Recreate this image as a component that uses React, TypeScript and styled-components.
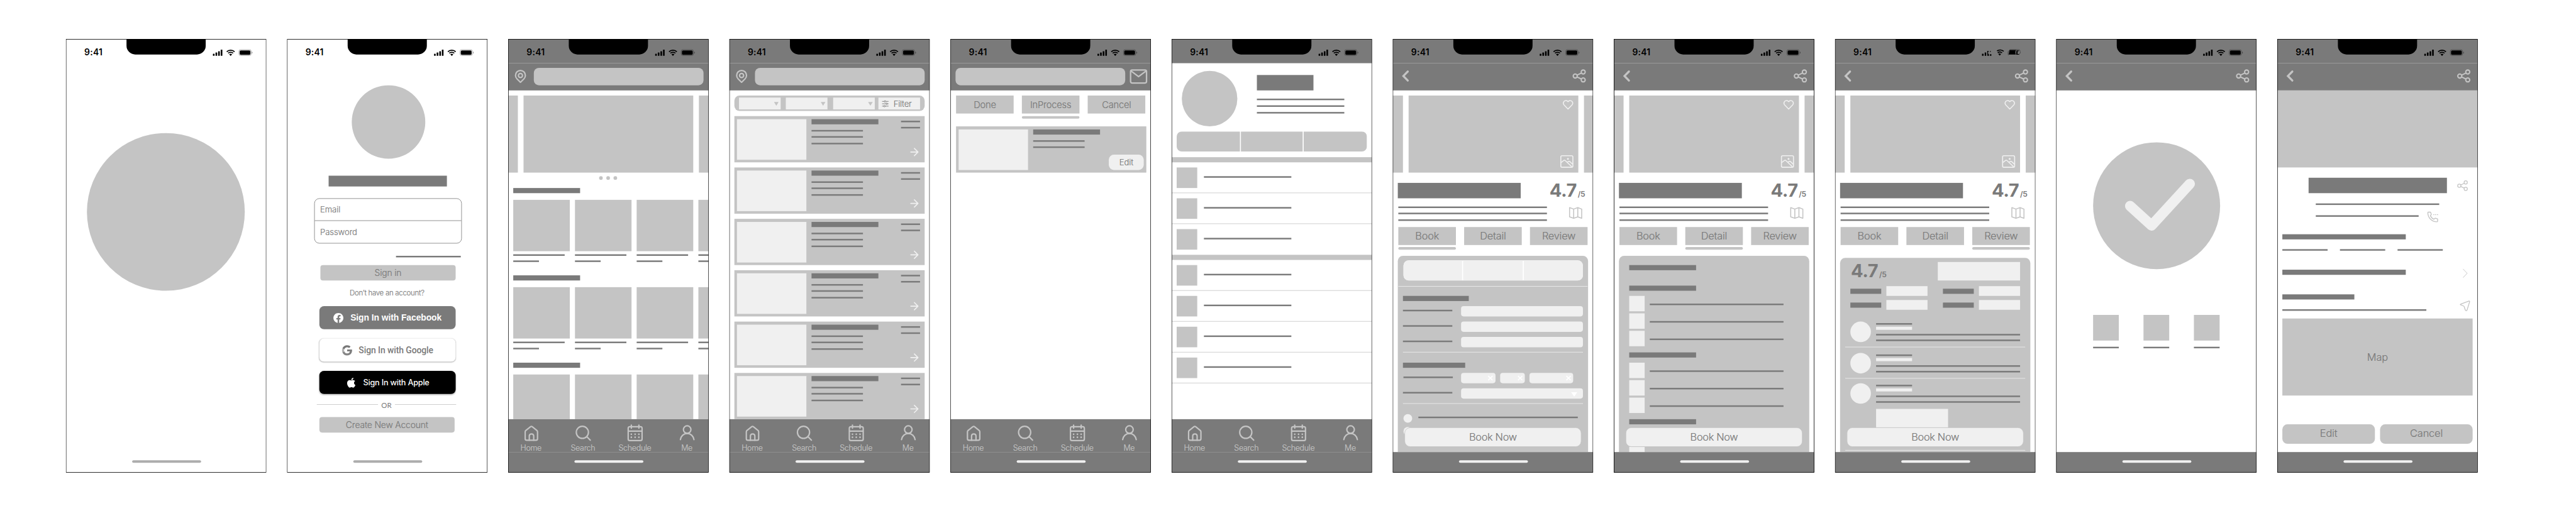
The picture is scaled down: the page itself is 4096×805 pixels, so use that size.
import React from "react";
import styled, { createGlobalStyle, css } from "styled-components";
import { FaApple, FaFacebook } from "react-icons/fa";

const DARK = "#7a7a7a";
const MID = "#c4c4c4";
const LIGHT = "#f0f0f0";

const GlobalStyle = createGlobalStyle`
  body { margin: 0; background: #fff; font-family: Inter, "Liberation Sans", sans-serif; }
  *, *::before, *::after { box-sizing: border-box; }
  svg { display: block; flex: none; overflow: visible; }
`;

/* Light weight, slightly emboldened: sits between Inter Light and Regular. */
const softText = css`
  font-weight: 300;
  -webkit-text-stroke: 0.2px currentColor;
`;

/* ---------- board and device frame ---------- */

const Viewport = styled.div`
  width: 4096px;
  height: 805px;
  overflow: hidden;
`;

const Board = styled.main`
  display: flex;
  align-items: flex-start;
  gap: 40px;
  width: 5009px;
  height: 985px;
  padding: 76px 128px;
  background: #fff;
  transform: scale(0.81773, 0.81726);
  transform-origin: 0 0;
`;

const Frame = styled.section`
  position: relative;
  display: flex;
  flex-direction: column;
  flex: none;
  width: 390px;
  height: 844px;
  overflow: hidden;
  background: #fff;

  &::after {
    content: "";
    position: absolute;
    inset: 0;
    border: 1px solid #000;
    pointer-events: none;
  }
`;

const Body = styled.div<{ $pad?: string }>`
  position: relative;
  display: flex;
  flex-direction: column;
  flex: 1;
  min-height: 0;
  overflow: hidden;
  padding: ${(p) => p.$pad ?? "0"};
`;

const StatusRow = styled.div<{ $tinted?: boolean }>`
  display: flex;
  align-items: flex-start;
  flex: none;
  height: 47px;
  background: ${(p) => (p.$tinted ? DARK : "transparent")};
`;

const Time = styled.span`
  width: 117.5px;
  padding: 14px 0 0 36px;
  font-size: 17px;
  font-weight: 600;
  line-height: 24px;
  letter-spacing: 0.3px;
  white-space: nowrap;
`;

const Notch = styled.div`
  width: 154.5px;
  height: 30px;
  border-radius: 0 0 17px 17px;
  background: #000;
`;

const StatusIcons = styled.div`
  display: flex;
  gap: 7.7px;
  padding: 19.5px 0 0 13.6px;
`;

const Status = ({ tinted = false, torn = false }: { tinted?: boolean; torn?: boolean }) => (
  <StatusRow $tinted={tinted}>
    <Time>9:41</Time>
    <Notch />
    <StatusIcons>
      {torn ? (
        <>
          <svg width="18.4" height="13" viewBox="0 0 18.4 13">
            <path d="M0 8.7h3v4H0zM5.2 6.3h3v6.4h-3zM10.2 3.2h2.6v1.6h-1v3.2l1.8 2.4v2.3h-3.2zM15.2 3.4h1.8v1.4h-1.8zM15.4 9.6h2.8v3.1h-2.8z" />
          </svg>
          <svg width="17" height="13" viewBox="0 0 17 13" fill="none" stroke="#000">
            <path d="M3.2 3.1A10.6 10.6 0 0 1 16.1 4" strokeWidth="2" />
            <path d="M4.6 6.8a6.6 6.6 0 0 1 8.4.3" strokeWidth="2" />
            <path d="M5.6 9.2a4.2 4.2 0 0 1 5.3 0L8.6 12.4z" fill="#000" stroke="none" />
          </svg>
          <svg width="27" height="13" viewBox="0 0 27 13">
            <path d="M3.4 1.4H16l-1.2 4 .6 4.6H1.8z" />
            <path d="M17 2.2h4.6v1.4h-2.4v5.6h3v1.3h-6z" />
            <path d="M4 .6h17a3 3 0 0 1 3 3v1M2 2.4.7 5v4.6a3 3 0 0 0 1 2M22 8.4h1.6M24.4 5v2.8" fill="none" stroke="#3c3c3c" />
          </svg>
        </>
      ) : (
        <>
          <svg width="18.4" height="13" viewBox="0 0 18.4 13">
            <rect x="0" y="8.5" width="3.2" height="4.2" rx=".7" />
            <rect x="5.1" y="6.3" width="3.2" height="6.4" rx=".7" />
            <rect x="10.2" y="3.6" width="3.2" height="9.1" rx=".7" />
            <rect x="15.2" y=".7" width="3.2" height="12" rx=".7" />
          </svg>
          <svg width="17" height="13" viewBox="0 0 17 13" fill="none" stroke="#000">
            <path d="M.9 4.7a10.9 10.9 0 0 1 15.2 0" strokeWidth="2.2" />
            <path d="M3.7 7.6a6.9 6.9 0 0 1 9.6 0" strokeWidth="2.1" />
            <path d="M5.7 9.9a4.1 4.1 0 0 1 5.6 0L8.5 12.8z" fill="#000" stroke="none" />
          </svg>
          <svg width="27" height="13" viewBox="0 0 27 13">
            <rect x=".5" y=".6" width="24" height="11.6" rx="3.6" fill="none" stroke="#000" strokeOpacity=".38" />
            <rect x="2" y="2.1" width="21" height="8.6" rx="2.2" />
            <path d="M25.8 4.4v4c.8-.3 1.4-1.1 1.4-2s-.6-1.7-1.4-2z" fillOpacity=".42" />
          </svg>
        </>
      )}
    </StatusIcons>
  </StatusRow>
);

const Footer = styled.footer<{ $tinted?: boolean }>`
  display: flex;
  flex: none;
  height: 40px;
  padding: 16px 0 0 129.3px;
  background: ${(p) => (p.$tinted ? DARK : "transparent")};
`;

const HomeIndicator = styled.div<{ $tone?: string }>`
  width: 134px;
  height: 5px;
  border-radius: 3px;
  background: ${(p) => p.$tone ?? LIGHT};
`;

const PlainFooter = () => (
  <Footer>
    <HomeIndicator $tone="#adadad" />
  </Footer>
);

const TintedFooter = () => (
  <Footer $tinted>
    <HomeIndicator />
  </Footer>
);

/* ---------- headers ---------- */

const HeaderBar = styled.header<{ $pad: string }>`
  display: flex;
  justify-content: space-between;
  align-items: flex-start;
  flex: none;
  height: 53px;
  padding: ${(p) => p.$pad};
  background: ${DARK};
`;

const SearchField = styled.div`
  width: 330px;
  height: 34px;
  border-radius: 10px;
  background: ${MID};
`;

const SearchHeader = () => (
  <HeaderBar $pad="9px 10px 0 13px">
    <svg width="22" height="34" viewBox="0 0 22 34" fill="none" stroke={MID} strokeWidth="2.7" strokeLinejoin="round">
      <path d="M11 28.2 4.3 21.6A9.6 9.6 0 1 1 17.7 21.6Z" />
      <circle cx="11" cy="15" r="4" />
    </svg>
    <SearchField />
  </HeaderBar>
);

const MailHeader = () => (
  <HeaderBar $pad="9px 7px 0 10px">
    <SearchField />
    <svg width="34" height="34" viewBox="0 0 34 34" fill="none" stroke={MID} strokeWidth="2.8" strokeLinejoin="round">
      <rect x="1.4" y="4.2" width="31" height="25.4" rx="3" />
      <path d="M2.2 6.2 16.9 17.2 31.6 6.2" />
    </svg>
  </HeaderBar>
);

const ShareIcon = ({ size, weight }: { size: number; weight: number }) => (
  <svg width={size} height={size} viewBox="0 0 26 26" fill="none" stroke={MID} strokeWidth={weight}>
    <circle cx="5" cy="13" r="3.9" />
    <circle cx="20.5" cy="5.2" r="3.9" />
    <circle cx="20.5" cy="20.6" r="3.9" />
    <path d="m8.4 11.300 8.700-4.300M8.400 14.700l8.700 4.200" />
  </svg>
);

const BackHeader = () => (
  <HeaderBar $pad="12px 14px 0 18px">
    <svg width="14" height="26" viewBox="0 0 14 26" fill="none" stroke={MID} strokeWidth="4" strokeLinecap="round">
      <path d="M11.4 4.2 2.8 13l8.6 8.8" />
    </svg>
    <ShareIcon size={26} weight={2.5} />
  </HeaderBar>
);

/* ---------- bottom tab bar ---------- */

const TabBar = styled.nav`
  display: grid;
  grid-template-columns: repeat(4, 101px);
  justify-content: center;
  flex: none;
  height: 64px;
  padding-top: 10px;
  padding-left: 2px;
  background: ${DARK};
`;

const TabItem = styled.div`
  ${softText}
  display: flex;
  flex-direction: column;
  align-items: center;
  gap: 2px;
  color: ${MID};
  font-size: 15.2px;
  line-height: 20px;
  letter-spacing: -0.35px;
`;

const tabs: { label: string; art: React.ReactNode }[] = [
  {
    label: "Home",
    art: (
      <>
        <path d="M5.2 14.6q0-1.6 1.2-2.6L15.6 4.6q1.7-1.3 3.4 0L28 12q1.2 1 1.2 2.6V28q0 3-3 3h-18q-3 0-3-3z" />
        <path d="M13.2 31v-8q0-4.3 4.3-4.3t4.3 4.3v8" />
      </>
    ),
  },
  {
    label: "Search",
    art: (
      <>
        <circle cx="15.4" cy="15.6" r="11.8" />
        <path d="m24.4 24.4 6.4 6.4" />
      </>
    ),
  },
  {
    label: "Schedule",
    art: (
      <>
        <rect x="3.5" y="4.6" width="27" height="27" rx="3" />
        <path d="M4 13.3h26M9.6 1.6v6M24.3 1.6v6" />
        <path
          d="M9.6 19.3h.01M17 19.3h.01M24.3 19.3h.01M9.6 25.2h.01M17 25.2h.01M24.3 25.2h.01"
          strokeWidth="3.2"
        />
      </>
    ),
  },
  {
    label: "Me",
    art: (
      <>
        <circle cx="17.2" cy="10.2" r="7.3" />
        <path d="M4 29.8c1-7 6.4-12 13.2-12s12.2 5 13.2 12" />
      </>
    ),
  },
];

const Navigation = () => (
  <>
    <TabBar>
      {tabs.map((t) => (
        <TabItem key={t.label}>
          <svg width="34" height="34" viewBox="0 0 34 34" fill="none" stroke={MID} strokeWidth="2.7" strokeLinecap="round" strokeLinejoin="round">
            {t.art}
          </svg>
          {t.label}
        </TabItem>
      ))}
    </TabBar>
    <TintedFooter />
  </>
);

/* ---------- wireframe primitives ---------- */

const gapTop = css<{ $top?: number }>`
  margin-top: ${(p) => p.$top ?? 0}px;
`;

const Line = styled.div<{ $w: number; $top?: number; $left?: number }>`
  ${gapTop}
  flex: none;
  width: ${(p) => p.$w}px;
  height: 3px;
  margin-left: ${(p) => p.$left ?? 0}px;
  background: ${DARK};
`;

const Heading = styled.div<{ $w: number; $h?: number; $top?: number; $left?: number }>`
  ${gapTop}
  flex: none;
  width: ${(p) => p.$w}px;
  height: ${(p) => p.$h ?? 10}px;
  margin-left: ${(p) => p.$left ?? 0}px;
  background: ${DARK};
`;

const Divider = styled.div<{ $top?: number; $inset?: number }>`
  ${gapTop}
  flex: none;
  height: 1px;
  margin-left: ${(p) => p.$inset ?? 0}px;
  margin-right: ${(p) => p.$inset ?? 0}px;
  background: ${LIGHT};
`;

const Disc = styled.div<{ $size: number; $tone?: string }>`
  flex: none;
  width: ${(p) => p.$size}px;
  height: ${(p) => p.$size}px;
  border-radius: 50%;
  background: ${(p) => p.$tone ?? MID};
`;

const Square = styled.div<{ $size: number; $tone?: string }>`
  flex: none;
  width: ${(p) => p.$size}px;
  height: ${(p) => p.$size}px;
  background: ${(p) => p.$tone ?? MID};
`;

const Stack = styled.div`
  display: flex;
  flex-direction: column;
`;

const Carousel = styled.div<{ $shift?: number }>`
  display: grid;
  grid-template-columns: 330px 330px 330px;
  gap: 11px;
  flex: none;
  height: 150px;
  margin: 10px 0 0 ${(p) => -311 + (p.$shift ?? 0)}px;
`;

const Slide = styled.div`
  display: flex;
  flex-direction: column;
  justify-content: space-between;
  align-items: flex-end;
  padding: 8px 10px 9px 0;
  background: ${MID};
`;

const ButtonTabs = styled.div<{ $margin: string }>`
  display: flex;
  justify-content: space-between;
  flex: none;
  width: 368px;
  margin: ${(p) => p.$margin};
`;

const ButtonTab = styled.div<{ $active: boolean; $size: number; $drop: number }>`
  ${softText}
  width: 112px;
  color: ${DARK};
  font-size: ${(p) => p.$size}px;
  line-height: 35px;
  text-align: center;
  letter-spacing: -0.3px;

  span { display: block; height: 35px; background: ${MID}; }
  &::after {
    content: "";
    display: block;
    height: 5px;
    margin-top: ${(p) => p.$drop}px;
    border-radius: 3px;
    background: ${(p) => (p.$active ? MID : "transparent")};
  }
`;

const Segments = styled.div<{ $tone: string; $cols: string; $margin: string }>`
  display: grid;
  grid-template-columns: ${(p) => p.$cols};
  gap: 2px;
  flex: none;
  height: 39px;
  margin: ${(p) => p.$margin};
  border-radius: 10px;
  overflow: hidden;
  background: #fff;

  i { background: ${(p) => p.$tone}; }
`;

/* ---------- 1. splash ---------- */

const SplashBody = styled(Body)`
  padding: 136px 0 0 41px;
`;

const Splash = () => (
  <Frame>
    <Status />
    <SplashBody>
      <Disc $size={307} />
    </SplashBody>
    <PlainFooter />
  </Frame>
);

/* ---------- 2. sign in ---------- */

const SignInBody = styled(Body)`
  padding: 43px 62px 0 53px;
  color: ${DARK};
`;

const Credentials = styled.div`
  ${softText}
  flex: none;
  width: 287px;
  height: 88px;
  margin-top: 23px;
  border: 1px solid ${DARK};
  border-radius: 10px;
  font-size: 16px;
  letter-spacing: -0.1px;
`;

const Credential = styled.div`
  height: 42px;
  padding-left: 10.5px;
  line-height: 42px;
  & + & { border-top: 1px solid ${DARK}; line-height: 44px; }
`;

const GreyButton = styled.div<{ $left: number; $top: number }>`
  ${softText}
  flex: none;
  width: 263px;
  height: 30px;
  margin: ${(p) => p.$top}px 0 0 ${(p) => p.$left}px;
  border-radius: 5px;
  background: ${MID};
  font-size: 17px;
  line-height: 30px;
  letter-spacing: -0.2px;
  text-align: center;
`;

const Hint = styled.p`
  ${softText}
  width: 285px;
  margin: 13px 0 0 -1px;
  font-size: 14px;
  line-height: 22px;
  letter-spacing: -0.34px;
  text-align: center;
`;

const SocialButton = styled.div<{ $kind: "facebook" | "google" | "apple"; $top: number }>`
  display: flex;
  align-items: center;
  justify-content: center;
  gap: 13px;
  flex: none;
  width: 265px;
  height: 45px;
  margin: ${(p) => p.$top}px 0 0 10px;
  border-radius: 9px;
  white-space: nowrap;
  ${(p) =>
    p.$kind === "facebook"
      ? css`background: ${DARK}; color: #fff; font: 700 17px "Liberation Sans", sans-serif; letter-spacing: -0.1px;`
      : p.$kind === "google"
      ? css`background: #fff; font: 500 17px Roboto, sans-serif; letter-spacing: -0.09px; box-shadow: 0 0 2px rgba(0,0,0,.1), 0 1.5px 2px rgba(0,0,0,.17);`
      : css`background: #000; color: #fff; font: 500 15.5px Inter, sans-serif; letter-spacing: -0.27px; gap: 12px; box-shadow: 0 0 2px rgba(0,0,0,.1), 0 1.5px 2px rgba(0,0,0,.17);`}
`;

const OrRow = styled.div`
  display: flex;
  align-items: center;
  flex: none;
  height: 16px;
  width: 271px;
  margin: 13px 0 0 5px;
  font: 400 14px Lato, sans-serif;

  &::before, &::after { content: ""; flex: 1; height: 1px; background: ${MID}; margin-bottom: 2px; }
  span { width: 33px; text-align: center; }
`;

const GoogleMark = () => (
  <svg width="20" height="20" viewBox="0 0 18 18">
    <path fill="#7d7d7d" d="M17.64 9.2c0-.637-.057-1.251-.164-1.84H9v3.481h4.844c-.209 1.125-.843 2.078-1.796 2.717v2.258h2.908c1.702-1.567 2.684-3.874 2.684-6.615z" />
    <path fill="#858585" d="M9 18c2.43 0 4.467-.806 5.956-2.18l-2.908-2.259c-.806.54-1.837.86-3.048.86-2.344 0-4.328-1.584-5.036-3.711H.957v2.332A8.997 8.997 0 0 0 9 18z" />
    <path fill="#b4b4b4" d="M3.964 10.71A5.41 5.41 0 0 1 3.682 9c0-.593.102-1.17.282-1.71V4.958H.957A8.996 8.996 0 0 0 0 9c0 1.452.348 2.827.957 4.042l3.007-2.332z" />
    <path fill="#777" d="M9 3.58c1.321 0 2.508.454 3.44 1.345l2.582-2.58C13.463.891 11.426 0 9 0A8.997 8.997 0 0 0 .957 4.958L3.964 7.29C4.672 5.163 6.656 3.58 9 3.58z" />
  </svg>
);

const AvatarSlot = styled.div`
  flex: none;
  padding-left: 73px;
`;

const SignIn = () => (
  <Frame>
    <Status />
    <SignInBody>
      <AvatarSlot>
        <Disc $size={143} />
      </AvatarSlot>
      <Heading $w={230} $h={21} $top={33} $left={28} />
      <Credentials>
        <Credential>Email</Credential>
        <Credential>Password</Credential>
      </Credentials>
      <Line $w={126} $top={24} $left={159} />
      <GreyButton $top={15} $left={12}>Sign in</GreyButton>
      <Hint>Don’t have an account?</Hint>
      <SocialButton $kind="facebook" $top={15}>
        <FaFacebook size={20} />
        Sign In with Facebook
      </SocialButton>
      <SocialButton $kind="google" $top={18}>
        <GoogleMark />
        Sign In with Google
      </SocialButton>
      <SocialButton $kind="apple" $top={18}>
        <FaApple size={22} />
        Sign In with Apple
      </SocialButton>
      <OrRow>
        <span>OR</span>
      </OrRow>
      <GreyButton $top={16} $left={10}>Create New Account</GreyButton>
    </SignInBody>
    <PlainFooter />
  </Frame>
);

/* ---------- 3. home ---------- */

const Dots = styled.div`
  display: flex;
  gap: 7px;
  flex: none;
  height: 30px;
  padding: 7px 0 0 177px;
`;

const Shelf = styled.div`
  flex: none;
  height: 170px;
  padding-left: 10px;
`;

const ShelfRow = styled.div`
  display: grid;
  grid-template-columns: repeat(4, 110px);
  gap: 10px;
  margin-top: 13px;
`;

const Thumb = styled.div`
  height: 100px;
  background: ${MID};
`;

const HomeScreen = () => (
  <Frame>
    <Status tinted />
    <SearchHeader />
    <Body>
      <Carousel>
        <Slide />
        <Slide />
        <Slide />
      </Carousel>
      <Dots>
        <Disc $size={7} />
        <Disc $size={7} />
        <Disc $size={7} />
      </Dots>
      {[0, 1, 2].map((s) => (
        <Shelf key={s}>
          <Heading $w={130} />
          <ShelfRow>
            {[0, 1, 2, 3].map((c) => (
              <div key={c}>
                <Thumb />
                <Line $w={100} $top={6} />
                <Line $w={50} $top={9} />
              </div>
            ))}
          </ShelfRow>
        </Shelf>
      ))}
    </Body>
    <Navigation />
  </Frame>
);

/* ---------- 4. search ---------- */

const FilterBar = styled.div`
  display: flex;
  flex: none;
  height: 30px;
  padding: 4px 9px 3px;
  border-radius: 10px;
  background: ${MID};
`;

const FilterCell = styled.div<{ $gap: number }>`
  ${softText}
  display: flex;
  align-items: center;
  justify-content: flex-end;
  flex: none;
  width: 81px;
  margin-right: ${(p) => p.$gap}px;
  padding-right: 4.5px;
  background: ${LIGHT};
`;

const FilterButton = styled(FilterCell)`
  justify-content: flex-start;
  gap: 10px;
  padding-left: 6.5px;
  color: ${DARK};
  font-size: 16px;
  letter-spacing: -0.3px;
`;

const ResultCard = styled.article`
  display: grid;
  grid-template-columns: 135px 130px 1fr;
  column-gap: 10px;
  flex: none;
  height: 90px;
  margin-top: 10px;
  padding: 6px 9px 5px 5px;
  background: ${MID};
`;

const Photo = styled.div`
  background: ${LIGHT};
`;

const CardSide = styled.div`
  display: flex;
  flex-direction: column;
  align-items: flex-end;
  padding-top: 3px;
`;

const CardArrow = styled.svg`
  margin: 38px 3px 0 0;
`;

const SearchScreen = () => (
  <Frame>
    <Status tinted />
    <SearchHeader />
    <Body $pad="10px 10px 0">
      <FilterBar>
        {[10, 11, 7].map((gap) => (
          <FilterCell key={gap} $gap={gap}>
            <svg width="9" height="8" viewBox="0 0 9 8">
              <path d="M0 .5h9L4.5 8z" fill={MID} />
            </svg>
          </FilterCell>
        ))}
        <FilterButton $gap={0}>
          <svg width="13" height="14" viewBox="0 0 13 14" fill="none" stroke={DARK} strokeWidth="1.1">
            <path d="M.2 2.4h4.2M7.4 2.4h5.4M.2 7h7.4M10.6 7h2.2M.2 11.6h3.2M6.4 11.6h6.4" />
            <circle cx="5.9" cy="2.4" r="1.5" />
            <circle cx="9.1" cy="7" r="1.5" />
            <circle cx="4.9" cy="11.6" r="1.5" />
          </svg>
          Filter
        </FilterButton>
      </FilterBar>
      {[0, 1, 2, 3, 4, 5].map((n) => (
        <ResultCard key={n}>
          <Photo />
          <Stack>
            <Heading $w={130} />
            <Line $w={100} $top={11} />
            <Line $w={100} $top={9} />
            <Line $w={100} $top={10} />
          </Stack>
          <CardSide>
            <Line $w={37} />
            <Line $w={37} $top={9} />
            <CardArrow width="16" height="16" viewBox="0 0 16 16" fill="none" stroke={LIGHT} strokeWidth="2" strokeLinecap="round" strokeLinejoin="round">
              <path d="M1 8h14M8 1l7 7-7 7" />
            </CardArrow>
          </CardSide>
        </ResultCard>
      ))}
    </Body>
    <Navigation />
  </Frame>
);

/* ---------- 5. schedule ---------- */

const BookingCard = styled(ResultCard)`
  width: 370px;
  margin: 15px 0 0 11px;
  padding: 6px 5px 5px 5px;
`;

const EditPill = styled.div`
  ${softText}
  align-self: end;
  justify-self: end;
  width: 68px;
  height: 30px;
  border-radius: 10px;
  background: ${LIGHT};
  color: ${DARK};
  font-size: 16px;
  line-height: 30px;
  letter-spacing: -0.1px;
  text-align: center;
`;

const ScheduleScreen = () => (
  <Frame>
    <Status tinted />
    <MailHeader />
    <Body>
      <ButtonTabs $margin="10px 0 0 11px">
        {["Done", "InProcess", "Cancel"].map((t) => (
          <ButtonTab key={t} $active={t === "InProcess"} $size={18} $drop={5}>
            <span>{t}</span>
          </ButtonTab>
        ))}
      </ButtonTabs>
      <BookingCard>
        <Photo />
        <Stack>
          <Heading $w={130} />
          <Line $w={100} $top={11} />
          <Line $w={100} $top={9} />
        </Stack>
        <EditPill>Edit</EditPill>
      </BookingCard>
    </Body>
    <Navigation />
  </Frame>
);

/* ---------- 6. profile ---------- */

const ProfileTop = styled.div`
  display: flex;
  align-items: flex-start;
  gap: 38px;
  flex: none;
  height: 133px;
  padding: 15px 0 0 20px;
`;

const Band = styled.div<{ $top?: number }>`
  ${gapTop}
  flex: none;
  height: 10px;
  background: ${MID};
`;

const MenuRow = styled.div<{ $ruled: boolean }>`
  display: flex;
  gap: 13px;
  flex: none;
  height: 60px;
  padding: 10px;
  border-bottom: ${(p) => (p.$ruled ? `1px solid ${MID}` : "0")};
`;

const ProfileScreen = () => (
  <Frame>
    <Status tinted />
    <Body>
      <ProfileTop>
        <Disc $size={108} />
        <Stack>
          <Heading $w={110} $h={30} $top={8} />
          <Line $w={170} $top={16} />
          <Line $w={170} $top={10} />
          <Line $w={170} $top={10} />
        </Stack>
      </ProfileTop>
      <Segments $tone={MID} $cols="123px 120px 1fr" $margin="0 10px">
        <i />
        <i />
        <i />
      </Segments>
      <Band $top={11} />
      {[0, 1, 2].map((n) => (
        <MenuRow key={n} $ruled={n < 2}>
          <Square $size={40} />
          <Line $w={170} $top={17} />
        </MenuRow>
      ))}
      <Band />
      {[0, 1, 2, 3].map((n) => (
        <MenuRow key={n} $ruled>
          <Square $size={40} />
          <Line $w={170} $top={17} />
        </MenuRow>
      ))}
    </Body>
    <Navigation />
  </Frame>
);

/* ---------- 7–9. venue pages ---------- */

const VenueHead = styled.div`
  display: flex;
  justify-content: space-between;
  align-items: flex-start;
  flex: none;
  height: 66px;
  padding: 0 16px 0 10px;
  margin-top: 20px;
`;

const Score = styled.div`
  height: 30px;
  color: ${DARK};
  font-size: 35.5px;
  font-weight: 700;
  line-height: 30px;
  letter-spacing: -0.5px;
  white-space: nowrap;

  small { margin-left: 2px; font-size: 14.8px; font-weight: 600; line-height: 0; letter-spacing: -0.4px; }
`;

const Rating = () => (
  <Score>
    4.7<small>/5</small>
  </Score>
);

const HeadAside = styled.div`
  display: flex;
  flex-direction: column;
  align-items: flex-end;
  gap: 16.5px;
`;

const MapIcon = styled.svg`
  margin-right: 5px;
`;

const Panel = styled.div`
  display: flex;
  flex-direction: column;
  flex: 1;
  min-height: 0;
  overflow: hidden;
  margin: 0 10px;
  border-radius: 10px 10px 0 0;
  background: ${MID};
`;

const BookNow = styled.div`
  ${softText}
  position: absolute;
  left: 23px;
  bottom: 10px;
  width: 344px;
  height: 38px;
  border: 1px solid ${MID};
  border-radius: 11px;
  background: ${LIGHT};
  color: ${DARK};
  font-size: 20px;
  line-height: 36px;
  letter-spacing: -0.4px;
  text-align: center;
`;

const Venue = ({ active, panelTop, shift = 0, torn = false, children }: {
  active: string;
  panelTop: number;
  shift?: number;
  torn?: boolean;
  children: React.ReactNode;
}) => (
  <Frame>
    <Status tinted torn={torn} />
    <BackHeader />
    <Body>
      <Carousel $shift={shift}>
        <Slide />
        <Slide>
          <svg width="20" height="20" viewBox="0 0 20 20" fill="none" stroke={LIGHT} strokeWidth="1.9" strokeLinejoin="round">
            <path d="M10 18.2 2.3 10.3C.7 8.5.6 5.4 2.3 3.4c1.9-2.1 5-2.2 6.9-.3l.8.8.8-.8c1.9-1.9 5-1.8 6.9.3 1.7 2 1.6 5.1 0 6.9z" />
          </svg>
          <svg width="25.4" height="25" viewBox="0 0 25.4 25" fill="none" stroke={LIGHT} strokeWidth="2" strokeLinejoin="round">
            <rect x="1" y="1.2" width="23.4" height="22.4" rx="2.4" />
            <path d="M1.4 14.4 7 10.2q1.2-.9 2.3.1L22.6 22.6M13.6 14l2.4-1.7q1.2-.8 2.3.1l5.8 5.4" />
            <circle cx="14.8" cy="7.2" r="1.9" fill={LIGHT} stroke="none" />
          </svg>
        </Slide>
        <Slide />
      </Carousel>
      <VenueHead>
        <Stack>
          <Heading $w={239} $h={30} />
          <Line $w={289} $top={16} $left={1} />
          <Line $w={289} $top={9} $left={1} />
          <Line $w={289} $top={10} $left={1} />
        </Stack>
        <HeadAside>
          <Rating />
          <MapIcon width="25.6" height="23" viewBox="0 0 25.6 23" fill="none" stroke={MID} strokeWidth="1.9" strokeLinejoin="round">
            <path d="M1 1.2 9 4v18L1 19.2zM9 4l8-2.8v18L9 22M17 1.2 24.6 4v18L17 19.2" />
          </MapIcon>
        </HeadAside>
      </VenueHead>
      <ButtonTabs $margin={`20px 0 ${panelTop - 410}px 11px`}>
        {["Book", "Detail", "Review"].map((t) => (
          <ButtonTab key={t} $active={t === active} $size={20} $drop={4}>
            <span>{t}</span>
          </ButtonTab>
        ))}
      </ButtonTabs>
      <Panel>{children}</Panel>
      <BookNow>Book Now</BookNow>
    </Body>
    <TintedFooter />
  </Frame>
);

const FormRow = styled.div`
  display: flex;
  align-items: flex-start;
  flex: none;
  height: 20px;
  margin: 10px 10px 0 10px;
`;

const Label = styled.div<{ $left?: number }>`
  width: 96px;
  height: 3px;
  margin: 7px ${(p) => 17.3 - (p.$left ?? 0)}px 0 ${(p) => p.$left ?? 0}px;
  background: ${DARK};
`;

const Field = styled.div<{ $w: number; $end?: number }>`
  display: flex;
  align-items: center;
  justify-content: flex-end;
  width: ${(p) => p.$w}px;
  height: 20px;
  padding-right: ${(p) => p.$end ?? 0}px;
  border-radius: 5px;
  background: ${LIGHT};
`;

const Chips = styled.div`
  display: flex;
  gap: 9px;
`;

const Cross = () => (
  <svg width="10" height="10" viewBox="0 0 10 10" stroke="#fff" strokeWidth="2">
    <path d="m.8.8 8.4 8.4M9.2.8.8 9.2" />
  </svg>
);

const OptionRow = styled.div<{ $top: number }>`
  ${gapTop}
  display: flex;
  gap: 12px;
  flex: none;
  padding-left: 11px;
`;

const BookScreen = () => (
  <Venue active="Book" panelTop={422} shift={1}>
    <Segments $tone={LIGHT} $cols="114px 116px 1fr" $margin="9px 10px 0 11px">
      <i />
      <i />
      <i />
    </Segments>
    <Divider $top={11} $inset={1} />
    <Heading $w={128} $top={18} $left={10} />
    {[0, 1, 2].map((n) => (
      <FormRow key={n}>
        <Label />
        <Field $w={236.7} />
      </FormRow>
    ))}
    <Divider $top={9} $inset={10} />
    <Heading $w={121} $top={20} $left={10} />
    <FormRow>
      <Label $left={0.7} />
      <Chips>
        <Field $w={66.7} $end={5}><Cross /></Field>
        <Field $w={48} $end={4.3}><Cross /></Field>
        <Field $w={85} $end={3.7}><Cross /></Field>
      </Chips>
    </FormRow>
    <FormRow>
      <Label />
      <Field $w={236.7} $end={10.5}>
        <svg width="12" height="9" viewBox="0 0 12 9">
          <path d="M0 1.6h12L6 10.2z" fill="#fff" />
        </svg>
      </Field>
    </FormRow>
    <Divider $top={9} $inset={10} />
    <OptionRow $top={20}>
      <Disc $size={17} $tone={LIGHT} />
      <Line $w={310} $top={5} />
    </OptionRow>
    <OptionRow $top={8}>
      <Disc $size={17} $tone={LIGHT} />
    </OptionRow>
  </Venue>
);

const CheckGroup = styled.div`
  display: grid;
  row-gap: 4px;
  flex: none;
  margin: 10px 0 0 20px;
`;

const CheckRow = styled.div`
  display: flex;
  gap: 10px;
  height: 30px;
`;

const Checks = () => (
  <CheckGroup>
    {[0, 1, 2].map((n) => (
      <CheckRow key={n}>
        <Square $size={30} $tone={LIGHT} />
        <Line $w={260} $top={15} />
      </CheckRow>
    ))}
  </CheckGroup>
);

const DetailScreen = () => (
  <Venue active="Detail" panelTop={422}>
    <Heading $w={130} $top={18} $left={20} />
    <Heading $w={130} $top={30} $left={20} />
    <Checks />
    <Heading $w={130} $top={12} $left={20} />
    <Checks />
    <Heading $w={130} $top={12} $left={20} />
    <Checks />
  </Venue>
);

const ReviewSummary = styled.div`
  display: flex;
  justify-content: space-between;
  flex: none;
  padding: 8px 20px 0 21px;
  height: 44px;
`;

const ScoreSlot = styled.div`
  padding-top: 3px;
`;

const WriteReview = styled.div`
  width: 160px;
  height: 36px;
  background: ${LIGHT};
`;

const Aspects = styled.div`
  display: grid;
  grid-template-columns: 150px 150px;
  column-gap: 30px;
  row-gap: 8px;
  flex: none;
  margin: 11px 0 0 20px;
`;

const AspectPair = styled.div`
  display: flex;
  align-items: center;
  gap: 10px;
`;

const AspectField = styled.div`
  width: 80px;
  height: 19px;
  background: ${LIGHT};
`;

const ReviewItem = styled.div<{ $top: number }>`
  ${gapTop}
  display: flex;
  gap: 10px;
  flex: none;
  height: 40px;
  padding-left: 20px;
`;

const Stars = styled.div`
  width: 70px;
  height: 6px;
  margin-top: 4px;
  background: ${LIGHT};
`;

const Attachment = styled.div`
  flex: none;
  width: 140px;
  height: 36px;
  margin: 10px 0 0 70px;
  background: ${LIGHT};
`;

const Review = ({ top }: { top: number }) => (
  <ReviewItem $top={top}>
    <Disc $size={40} $tone={LIGHT} />
    <Stack>
      <Line $w={70} $top={3} />
      <Stars />
      <Line $w={280} $top={8} />
      <Line $w={280} $top={8} />
    </Stack>
  </ReviewItem>
);

const ReviewScreen = () => (
  <Venue active="Review" panelTop={426} torn>
    <ReviewSummary>
      <ScoreSlot>
        <Rating />
      </ScoreSlot>
      <WriteReview />
    </ReviewSummary>
    <Aspects>
      {[0, 1, 2, 3].map((n) => (
        <AspectPair key={n}>
          <Heading $w={60} />
          <AspectField />
        </AspectPair>
      ))}
    </Aspects>
    <Review top={23} />
    <Divider $top={9} $inset={10} />
    <Review top={11} />
    <Divider $top={9} $inset={10} />
    <Review top={9} />
    <Attachment />
    <Divider $top={44} $inset={10} />
  </Venue>
);

/* ---------- 10. confirmation ---------- */

const SuccessBadge = styled.div`
  display: grid;
  place-items: center;
  flex: none;
  width: 247px;
  height: 247px;
  margin: 101px 0 0 72px;
  border-radius: 50%;
  background: ${MID};
`;

const Shortcuts = styled.div`
  display: grid;
  grid-template-columns: repeat(3, 50px);
  column-gap: 48px;
  margin: 89px 0 0 72px;
`;

const ConfirmScreen = () => (
  <Frame>
    <Status tinted />
    <BackHeader />
    <Body>
      <SuccessBadge>
        <svg width="247" height="247" viewBox="0 0 247 247" fill="none" stroke={LIGHT} strokeWidth="20" strokeLinecap="round" strokeLinejoin="round">
          <path d="m72 124 41.7 38L188 81" />
        </svg>
      </SuccessBadge>
      <Shortcuts>
        {[0, 1, 2].map((n) => (
          <div key={n}>
            <Square $size={50} />
            <Line $w={50} $top={12} />
          </div>
        ))}
      </Shortcuts>
    </Body>
    <TintedFooter />
  </Frame>
);

/* ---------- 11. booking detail ---------- */

const Hero = styled.div`
  flex: none;
  height: 150px;
  background: ${MID};
`;

const BookingTitle = styled.div`
  display: flex;
  align-items: center;
  gap: 19.5px;
  flex: none;
  margin: 20px 0 0 61px;
`;

const PhoneRow = styled.div`
  display: flex;
  align-items: flex-start;
  gap: 17px;
  flex: none;
  height: 24px;
  margin: 13px 0 0 75px;
`;

const InfoRow = styled.div<{ $top: number; $h: number }>`
  ${gapTop}
  display: flex;
  justify-content: space-between;
  align-items: flex-start;
  flex: none;
  height: ${(p) => p.$h}px;
  padding: 0 15px 0 10px;
`;

const Triple = styled.div`
  display: grid;
  grid-template-columns: repeat(3, 88px);
  column-gap: 24px;
  flex: none;
  margin: 19px 0 0 10px;
`;

const MapBox = styled.div`
  ${softText}
  flex: none;
  height: 150px;
  margin: 15px 10px 0;
  background: ${MID};
  color: ${DARK};
  font-size: 20px;
  line-height: 150px;
  letter-spacing: -0.2px;
  text-align: center;
`;

const Actions = styled.div`
  display: grid;
  grid-template-columns: 1fr 1fr;
  column-gap: 10px;
  flex: none;
  margin: 56px 10px 0;
`;

const Action = styled.div`
  ${softText}
  height: 38px;
  border-radius: 10px;
  background: ${MID};
  color: ${DARK};
  font-size: 20px;
  line-height: 37px;
  letter-spacing: -0.2px;
  text-align: center;
`;

const ChevronMark = styled.svg`
  margin: -2px 0 0 0;
`;

const SendMark = styled.svg`
  margin-top: 12px;
`;

const BookingScreen = () => (
  <Frame>
    <Status tinted />
    <BackHeader />
    <Body>
      <Hero />
      <BookingTitle>
        <Heading $w={269} $h={30} />
        <ShareIcon size={21} weight={1.9} />
      </BookingTitle>
      <Line $w={240} $top={20} $left={75} />
      <PhoneRow>
        <Line $w={200} $top={7} />
        <svg width="21" height="21" viewBox="0 0 21 21" fill="none" stroke={MID} strokeWidth="1.7" strokeLinejoin="round" strokeLinecap="round">
          <path d="M1.7.9h3.6q.9 0 1.2.9l1 3q.3.9-.4 1.5L5.8 7.6q1.9 5 7 7.2l1.5-1.5q.6-.6 1.4-.4l3.2.8q1 .3 1 1.2v3.6q0 1.2-1.2 1.3C8.2 19.8.8 11.2.9 2.2Q.9.9 1.7.9z" />
          <path d="M12.3 5.8h.6M15.9 5.8h.6M19.5 5.8h.6" />
        </svg>
      </PhoneRow>
      <Heading $w={240} $top={20} $left={10} />
      <Triple>
        <Line $w={88} />
        <Line $w={88} />
        <Line $w={88} />
      </Triple>
      <InfoRow $top={37} $h={48}>
        <Heading $w={240} />
        <ChevronMark width="14" height="18" viewBox="0 0 14 18" fill="none" stroke={MID} strokeWidth="1.1">
          <path d="m.4.6 8 8.4-8 8.4" />
        </ChevronMark>
      </InfoRow>
      <InfoRow $top={0} $h={32}>
        <Stack>
          <Heading $w={140} />
          <Line $w={280} $top={19} />
        </Stack>
        <SendMark width="20" height="21" viewBox="0 0 20 21" fill="none" stroke={MID} strokeWidth="1.6" strokeLinejoin="round">
          <path d="M18 1 1.6 7.2q-1.2.6 0 1.2l5.6 2.2q1 .4 1.3 1.3l2.2 6.6q1.7 2.6 3.4.2l5-16q.2-1.9-1.1-1.7z" />
        </SendMark>
      </InfoRow>
      <MapBox>Map</MapBox>
      <Actions>
        <Action>Edit</Action>
        <Action>Cancel</Action>
      </Actions>
    </Body>
    <TintedFooter />
  </Frame>
);

export default function App() {
  return (
    <Viewport>
      <GlobalStyle />
      <Board>
        <Splash />
        <SignIn />
        <HomeScreen />
        <SearchScreen />
        <ScheduleScreen />
        <ProfileScreen />
        <BookScreen />
        <DetailScreen />
        <ReviewScreen />
        <ConfirmScreen />
        <BookingScreen />
      </Board>
    </Viewport>
  );
}
